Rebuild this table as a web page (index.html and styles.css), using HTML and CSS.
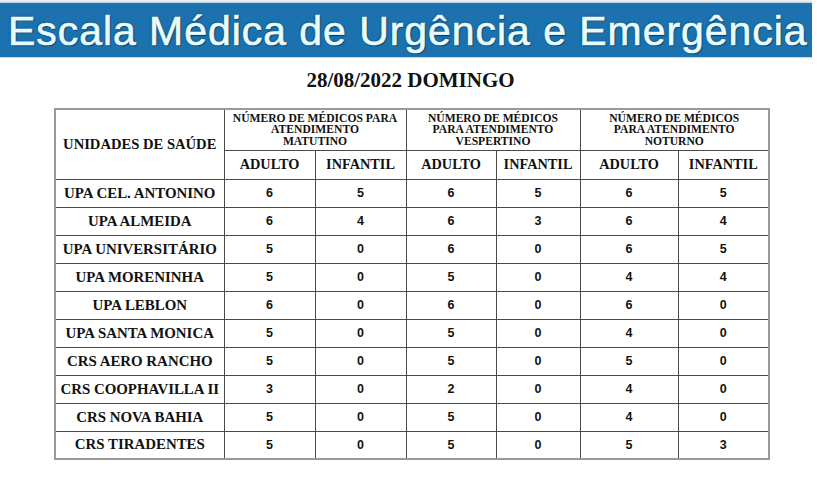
FILE: index.html
```html
<!DOCTYPE html>
<html lang="pt-BR">
<head>
<meta charset="utf-8">
<title>Escala Médica de Urgência e Emergência</title>
<link rel="stylesheet" href="styles.css">
</head>
<body>
<div class="page">
  <div class="topstrip"></div>
  <header class="banner">
    <h1 class="banner-title">Escala Médica de Urgência e Emergência</h1>
  </header>
  <div class="banner-edge"></div>
  <h2 class="date">28/08/2022 DOMINGO</h2>
  <div class="table-wrap">
    <table class="escala">
      <colgroup>
        <col class="c-unit">
        <col class="c-a1"><col class="c-i1">
        <col class="c-a2"><col class="c-i2">
        <col class="c-a3"><col class="c-i3">
      </colgroup>
      <thead>
        <tr class="h1row">
          <th rowspan="2" class="unit-head">UNIDADES DE SAÚDE</th>
          <th colspan="2" class="period">NÚMERO DE MÉDICOS PARA<br>ATENDIMENTO<br>MATUTINO</th>
          <th colspan="2" class="period">NÚMERO DE MÉDICOS<br>PARA ATENDIMENTO<br>VESPERTINO</th>
          <th colspan="2" class="period">NÚMERO DE MÉDICOS<br>PARA ATENDIMENTO<br>NOTURNO</th>
        </tr>
        <tr class="h2row">
          <th class="sub">ADULTO</th><th class="sub">INFANTIL</th>
          <th class="sub">ADULTO</th><th class="sub">INFANTIL</th>
          <th class="sub">ADULTO</th><th class="sub">INFANTIL</th>
        </tr>
      </thead>
      <tbody>
        <tr><th class="unit">UPA CEL. ANTONINO</th><td>6</td><td>5</td><td>6</td><td>5</td><td>6</td><td>5</td></tr>
        <tr><th class="unit">UPA ALMEIDA</th><td>6</td><td>4</td><td>6</td><td>3</td><td>6</td><td>4</td></tr>
        <tr><th class="unit">UPA UNIVERSITÁRIO</th><td>5</td><td>0</td><td>6</td><td>0</td><td>6</td><td>5</td></tr>
        <tr><th class="unit">UPA MORENINHA</th><td>5</td><td>0</td><td>5</td><td>0</td><td>4</td><td>4</td></tr>
        <tr><th class="unit">UPA LEBLON</th><td>6</td><td>0</td><td>6</td><td>0</td><td>6</td><td>0</td></tr>
        <tr><th class="unit">UPA SANTA MONICA</th><td>5</td><td>0</td><td>5</td><td>0</td><td>4</td><td>0</td></tr>
        <tr><th class="unit">CRS AERO RANCHO</th><td>5</td><td>0</td><td>5</td><td>0</td><td>5</td><td>0</td></tr>
        <tr><th class="unit">CRS COOPHAVILLA II</th><td>3</td><td>0</td><td>2</td><td>0</td><td>4</td><td>0</td></tr>
        <tr><th class="unit">CRS NOVA BAHIA</th><td>5</td><td>0</td><td>5</td><td>0</td><td>4</td><td>0</td></tr>
        <tr><th class="unit">CRS TIRADENTES</th><td>5</td><td>0</td><td>5</td><td>0</td><td>5</td><td>3</td></tr>
      </tbody>
    </table>
  </div>
</div>
</body>
</html>
```

FILE: styles.css
```css
html, body {
  margin: 0;
  padding: 0;
  background: #ffffff;
}

.page {
  width: 817px;
  height: 477px;
  overflow: hidden;
}

.topstrip {
  height: 3px;
  width: 812px;
  background: linear-gradient(to bottom, #f4f7f9, #b9d3e6);
}

.banner {
  width: 812px;
  height: 54px;
  background: #1b72af;
  display: flex;
  align-items: center;
  box-sizing: border-box;
  padding-left: 8px;
}

.banner-edge {
  width: 812px;
  height: 1px;
  background: #c9d6df;
}

.banner-title {
  margin: 0;
  font-family: "Liberation Sans", Arial, sans-serif;
  font-weight: normal;
  font-size: 41px;
  letter-spacing: 0.95px;
  line-height: 1;
  color: #e9fcfd;
  white-space: nowrap;
  -webkit-text-stroke: 0.7px #e4f9fb;
  text-shadow: 1px 1px 1px #0a3658, -1px -1px 1px #155d90, 0 0 2px #0d4470;
  position: relative;
  top: 1px;
}

.date {
  margin: 0;
  padding-top: 10px;
  height: 40px;
  box-sizing: border-box;
  text-align: center;
  font-family: "Liberation Serif", "Times New Roman", serif;
  font-weight: bold;
  font-size: 21px;
  line-height: 24px;
  color: #111;
  padding-left: 4px;
}

.table-wrap {
  padding-left: 54px;
  padding-top: 10px;
}

.escala {
  border-collapse: collapse;
  table-layout: fixed;
  width: 714px;
  border: 2px solid #9a9a9a;
  color: #111;
}

.c-unit { width: 169px; }
.c-a1 { width: 91px; }
.c-i1 { width: 91px; }
.c-a2 { width: 90px; }
.c-i2 { width: 84px; }
.c-a3 { width: 98px; }
.c-i3 { width: 91px; }

.escala th,
.escala td {
  border: 1px solid #4a4a4a;
  padding: 0;
  text-align: center;
  vertical-align: middle;
}

.h1row { height: 41px; }
.h2row { height: 29px; }
.escala tbody tr { height: 28px; }

.unit-head {
  font-family: "Liberation Serif", "Times New Roman", serif;
  font-weight: bold;
  font-size: 14.6px;
  padding-top: 4px;
}

.period {
  font-family: "Liberation Serif", "Times New Roman", serif;
  font-weight: bold;
  font-size: 11.6px;
  line-height: 11.5px;
  padding-bottom: 1px;
}

.sub {
  font-family: "Liberation Serif", "Times New Roman", serif;
  font-weight: bold;
  font-size: 14.3px;
}

.unit {
  font-family: "Liberation Serif", "Times New Roman", serif;
  font-weight: bold;
  font-size: 14.9px;
  white-space: nowrap;
}

.escala td {
  font-family: "Liberation Sans", Arial, sans-serif;
  font-weight: bold;
  font-size: 12.5px;
}
```
